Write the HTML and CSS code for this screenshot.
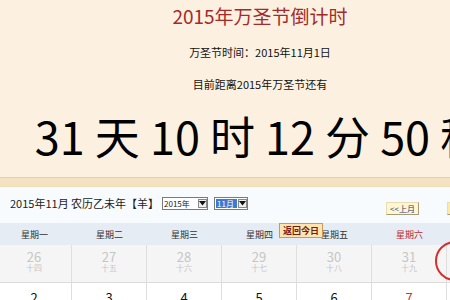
FILE: index.html
```html
<!DOCTYPE html>
<html>
<head>
<meta charset="utf-8">
<link rel="stylesheet" href="styles.css">
</head>
<body>
<div class="page">
  <div class="top">
    <h1 class="title">2015年万圣节倒计时</h1>
    <p class="date">万圣节时间：2015年11月1日</p>
    <p class="remain">目前距离2015年万圣节还有</p>
    <div class="count">31 天 10 时 12 分 50 秒</div>
  </div>
  <div class="stripe"></div>
  <div class="cal">
    <div class="cal-head">
      <span class="cal-title">2015年11月 农历乙未年【羊】</span>
      <span class="select sel-year"><span class="val">2015年</span><span class="arrow"><svg width="7" height="5" viewBox="0 0 7 5"><path d="M0 0H7L3.5 4.5Z" fill="#111"/></svg></span></span>
      <span class="select sel-month"><span class="val hl">11月</span><span class="arrow"><svg width="7" height="5" viewBox="0 0 7 5"><path d="M0 0H7L3.5 4.5Z" fill="#111"/></svg></span></span>
      <span class="btn prev-btn">&lt;&lt;上月</span>
      <span class="btn next-btn">下月&gt;&gt;</span>
    </div>
    <div class="grid weekdays">
      <div class="wd">星期一</div>
      <div class="wd">星期二</div>
      <div class="wd">星期三</div>
      <div class="wd">星期四</div>
      <div class="wd">星期五</div>
      <div class="wd red">星期六</div>
      <div class="wd red">星期日</div>
      <span class="today-btn">返回今日</span>
    </div>
    <div class="grid row prev">
      <div class="cell"><b>26</b><i>十四</i></div>
      <div class="cell"><b>27</b><i>十五</i></div>
      <div class="cell"><b>28</b><i>十六</i></div>
      <div class="cell"><b>29</b><i>十七</i></div>
      <div class="cell"><b>30</b><i>十八</i></div>
      <div class="cell"><b>31</b><i>十九</i></div>
      <div class="cell cur"><span class="ring"></span><b>1</b><i>万圣节</i></div>
    </div>
    <div class="grid row">
      <div class="cell"><b>2</b><i>廿一</i></div>
      <div class="cell"><b>3</b><i>廿二</i></div>
      <div class="cell"><b>4</b><i>廿三</i></div>
      <div class="cell"><b>5</b><i>廿四</i></div>
      <div class="cell"><b>6</b><i>廿五</i></div>
      <div class="cell redn"><b>7</b><i>廿六</i></div>
      <div class="cell redn"><b>8</b><i>廿七</i></div>
    </div>
  </div>
</div>
</body>
</html>
```
FILE: styles.css
```css
html, body {
  margin: 0;
  padding: 0;
  width: 450px;
  height: 300px;
  overflow: hidden;
  background: #fff;
}
.page {
  width: 520px;
  font-family: "Noto Sans CJK SC", "Noto Sans", sans-serif;
}
.top {
  background: #fcf1e1;
  height: 177px;
  text-align: center;
  overflow: hidden;
}
.title {
  margin: 0;
  padding-top: 5px;
  font-size: 19px;
  line-height: 22px;
  font-weight: normal;
  color: #a52a2a;
}
.date {
  margin: 17px 0 0;
  font-size: 11px;
  line-height: 16px;
  color: #111;
}
.remain {
  margin: 16px 0 0;
  font-size: 11px;
  line-height: 16px;
  color: #111;
}
.count {
  margin-top: 17px;
  font-size: 45px;
  line-height: 54px;
  white-space: nowrap;
  color: #000;
}
.stripe {
  height: 8px;
  background: #f4e2c0;
  border-top: 1px solid #e4cfa6;
  border-bottom: 1px solid #efdcb8;
}
.cal {
  background: #f8fbfd;
}
.cal-head {
  height: 36px;
  display: flex;
  align-items: center;
  padding-left: 10px;
  font-size: 11px;
  color: #222;
}
.cal-title {
  width: 152px;
  white-space: nowrap;
  margin-top: -4px;
}
.select {
  display: flex;
  align-items: center;
  height: 11px;
  border: 1px solid #7a7a7a;
  background: #fff;
  font-size: 8px;
  line-height: 11px;
  margin-top: -4px;
}
.sel-year { width: 44px; }
.sel-month { width: 32px; margin-left: 6px; }
.val {
  flex: 1;
  padding-left: 1px;
  white-space: nowrap;
}
.val.hl {
  background: #3b7bcf;
  color: #fff;
  margin: 1px;
  line-height: 9px;
}
.arrow {
  width: 9px;
  height: 9px;
  border: 1px solid #888;
  box-sizing: border-box;
  display: flex;
  align-items: center;
  justify-content: center;
  background: #eee;
}
.btn {
  height: 11px;
  padding: 0 3px;
  font-size: 8px;
  line-height: 11px;
  color: #2b3b7a;
  background: #fff6d2;
  border: 1px solid #e9dcb0;
  border-right-color: #a89a78;
  border-bottom-color: #a89a78;
  margin-top: 6px;
  white-space: nowrap;
}
.prev-btn { margin-left: 138px; }
.next-btn { margin-left: 28px; background: #fde9a8; }
.grid {
  display: grid;
  grid-template-columns: repeat(7, 75px);
  margin-left: -3px;
  position: relative;
}
.weekdays {
  height: 22px;
  background: #e5ecf3;
  align-items: center;
  font-size: 9px;
  color: #333;
  text-align: center;
}
.wd.red { color: #c0262d; }
.today-btn {
  position: absolute;
  left: 282px;
  top: 0px;
  height: 13px;
  padding: 0 3px;
  font-size: 9px;
  line-height: 13px;
  font-weight: bold;
  color: #7a1c10;
  background: #fde4b0;
  border: 1px solid #c89a58;
}
.row {
  height: 37px;
  background: #fff;
  border-bottom: 1px solid #dcdcdc;
}
.row.prev { background: #f5f5f5; }
.cell {
  position: relative;
  border-right: 1px solid #dedede;
  text-align: center;
  display: flex;
  flex-direction: column;
  align-items: center;
  padding-top: 5px;
}
.cell b {
  font-weight: normal;
  font-size: 13px;
  line-height: 13px;
  color: #111;
}
.cell i {
  font-style: normal;
  font-size: 8px;
  line-height: 9px;
  color: #999;
}
.prev .cell b { color: #c6c6c6; }
.prev .cell i { color: #c6c6c6; }
.row:not(.prev) .cell { padding-top: 8px; }
.redn b { color: #d0303a !important; }
.ring {
  position: absolute;
  left: -12px;
  top: -4px;
  width: 36px;
  height: 36px;
  border: 2px solid #d03030;
  border-radius: 50%;
}
```
